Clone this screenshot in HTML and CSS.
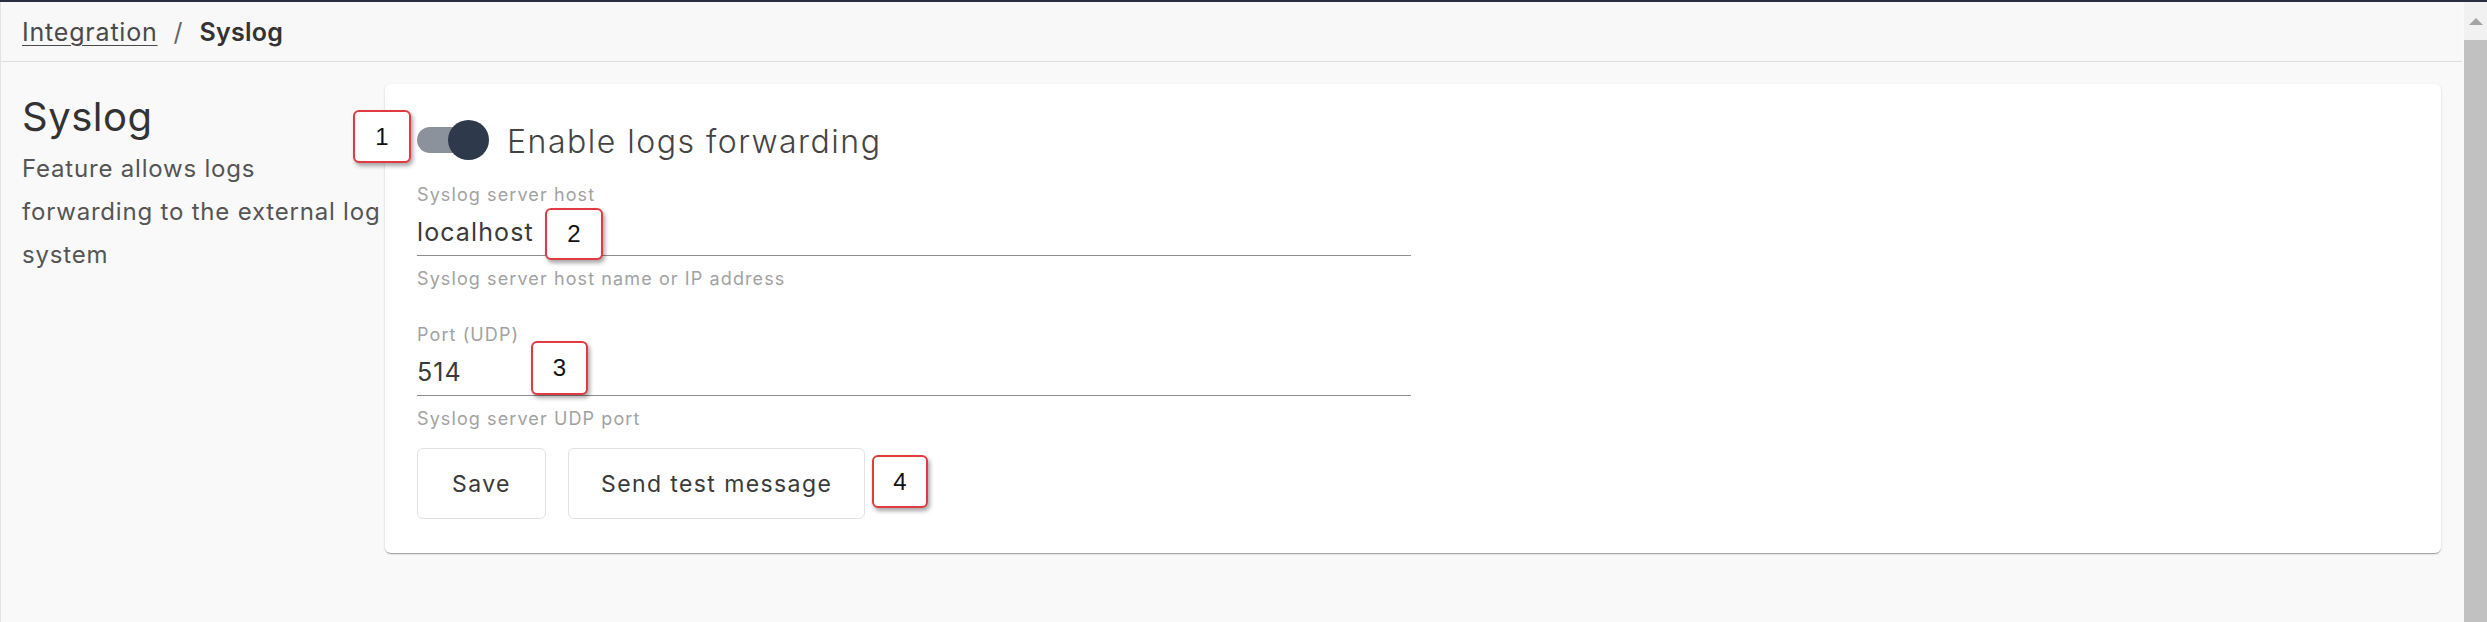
FILE: index.html
```html
<!DOCTYPE html>
<html lang="en">
<head>
<meta charset="utf-8">
<title>Syslog</title>
<link rel="stylesheet" href="styles.css">
</head>
<body>
<div class="window">
  <div class="main">
    <header class="topbar">
      <nav class="crumbs">
        <a class="crumb-link" href="#">Integration</a>
        <span class="crumb-sep">/</span>
        <span class="crumb-current">Syslog</span>
      </nav>
    </header>
    <div class="content">
      <aside class="intro">
        <h1 class="intro-title">Syslog</h1>
        <p class="intro-text">Feature allows logs<br>forwarding to the external log<br>system</p>
      </aside>
      <section class="card">
        <div class="toggle-row">
          <span class="switch"><span class="knob"></span></span>
          <span class="toggle-label">Enable logs forwarding</span>
        </div>
        <div class="field">
          <div class="field-label">Syslog server host</div>
          <div class="field-input">localhost</div>
          <div class="field-hint">Syslog server host name or IP address</div>
        </div>
        <div class="field field-port">
          <div class="field-label">Port (UDP)</div>
          <div class="field-input">514</div>
          <div class="field-hint">Syslog server UDP port</div>
        </div>
        <div class="actions">
          <button class="btn btn-save">Save</button>
          <button class="btn">Send test message</button>
        </div>
      </section>
    </div>
  </div>
  <div class="scrollbar">
    <div class="sb-arrow"><span class="sb-tri"></span></div>
    <div class="sb-thumb"></div>
  </div>
  <div class="callout callout-1">1</div>
  <div class="callout callout-2">2</div>
  <div class="callout callout-3">3</div>
  <div class="callout callout-4">4</div>
</div>
</body>
</html>
```

FILE: styles.css
```css
* { box-sizing: border-box; }
html, body { margin: 0; padding: 0; }
body {
  background: #f9f9f9;
  font-family: Inter, "Noto Sans", "Liberation Sans", sans-serif;
  color: #333;
}
.window {
  position: relative;
  display: flex;
  width: 2487px;
  height: 622px;
  overflow: hidden;
  border-top: 2px solid #2a2e3f;
}
.main {
  flex: 1;
  display: flex;
  flex-direction: column;
  border-left: 1px solid #e4e4e4;
  background: #f9f9f9;
}
.topbar {
  height: 60px;
  border-bottom: 1px solid #dedede;
  border-top-right-radius: 6px;
  background: #f8f8f8;
  margin-right: 2px;
  display: flex;
  align-items: center;
  padding-left: 21px;
}
.crumbs { display: flex; align-items: center; font-size: 25px; letter-spacing: 0.8px; }
.crumb-link { color: #4a4a4a; text-decoration: underline; text-underline-offset: 4px; text-decoration-thickness: 1px; }
.crumb-sep { color: #666; margin: 0 16px; }
.crumb-current { font-weight: 600; color: #333; letter-spacing: 0.3px; }

.content {
  display: flex;
  padding: 22px 23px 0 21px;
}
.intro { width: 363px; flex: none; }
.intro-title {
  margin: 9px 0 0;
  font-size: 40px;
  font-weight: 400;
  letter-spacing: 0.5px;
  line-height: 48px;
  color: #333;
}
.intro-text {
  margin: 6px 0 0;
  font-size: 24px;
  letter-spacing: 0.8px;
  line-height: 43px;
  color: #555;
  white-space: nowrap;
}
.card {
  flex: 1;
  height: 469px;
  background: #fff;
  border-radius: 6px;
  box-shadow: 0 2px 1px -1px rgba(0,0,0,.2), 0 1px 1px 0 rgba(0,0,0,.14), 0 1px 3px 0 rgba(0,0,0,.12);
  padding: 36px 32px 33px;
}
.toggle-row { display: flex; align-items: center; height: 40px; }
.switch {
  position: relative;
  width: 72px;
  height: 40px;
  display: inline-flex;
  align-items: center;
}
.switch::before {
  content: "";
  width: 62px;
  height: 26px;
  border-radius: 13px;
  background: #8b929c;
}
.knob {
  position: absolute;
  right: 0;
  top: 0;
  width: 41px;
  height: 40px;
  border-radius: 50%;
  background: #2e3a4c;
}
.toggle-label {
  margin-left: 18px;
  font-size: 32px;
  letter-spacing: 1.5px;
  font-weight: 300;
  color: #444;
  position: relative;
  top: 1px;
}
.field { width: 994px; margin-top: 24px; }
.field-port { margin-top: 34px; }
.field-label, .field-hint {
  font-size: 18px;
  letter-spacing: 1.1px;
  line-height: 22px;
  color: #a2a2a2;
  font-weight: 400;
}
.field-input {
  margin-top: 10px;
  font-size: 25px;
  letter-spacing: 1.1px;
  line-height: 32px;
  padding-bottom: 7px;
  border-bottom: 1px solid #8d8d8d;
  color: #3a3a3a;
  font-weight: 400;
}
.field-hint { margin-top: 12px; }
.actions { display: flex; gap: 22px; margin-top: 18px; }
.btn {
  height: 71px;
  padding: 0 32px;
  background: #fff;
  border: 1px solid #e2e2e2;
  border-radius: 6px;
  font-family: inherit;
  font-size: 23px;
  letter-spacing: 1.4px;
  color: #3a3a3a;
}
.btn-save { min-width: 129px; }

.scrollbar {
  width: 23px;
  flex: none;
  display: flex;
  flex-direction: column;
}
.sb-arrow {
  height: 38px;
  background: #f1f1f1;
  display: flex;
  align-items: center;
  justify-content: center;
}
.sb-tri {
  width: 0; height: 0;
  border-left: 7px solid transparent;
  border-right: 7px solid transparent;
  border-bottom: 7px solid #a3a3a3;
}
.sb-thumb { flex: 1; background: #c1c1c1; }

.callout {
  position: absolute;
  background: #fff;
  border: 2px solid #e23b3f;
  border-radius: 6px;
  box-shadow: 2px 3px 4px rgba(0,0,0,.35);
  font-family: "Liberation Sans", Arial, sans-serif;
  font-size: 24px;
  color: #111;
  display: flex;
  align-items: center;
  justify-content: center;
}
.callout-1 { left: 353px; top: 108px; width: 58px; height: 53px; }
.callout-2 { left: 545px; top: 206px; width: 58px; height: 52px; }
.callout-3 { left: 531px; top: 339px; width: 57px; height: 54px; }
.callout-4 { left: 872px; top: 453px; width: 56px; height: 53px; }
```
